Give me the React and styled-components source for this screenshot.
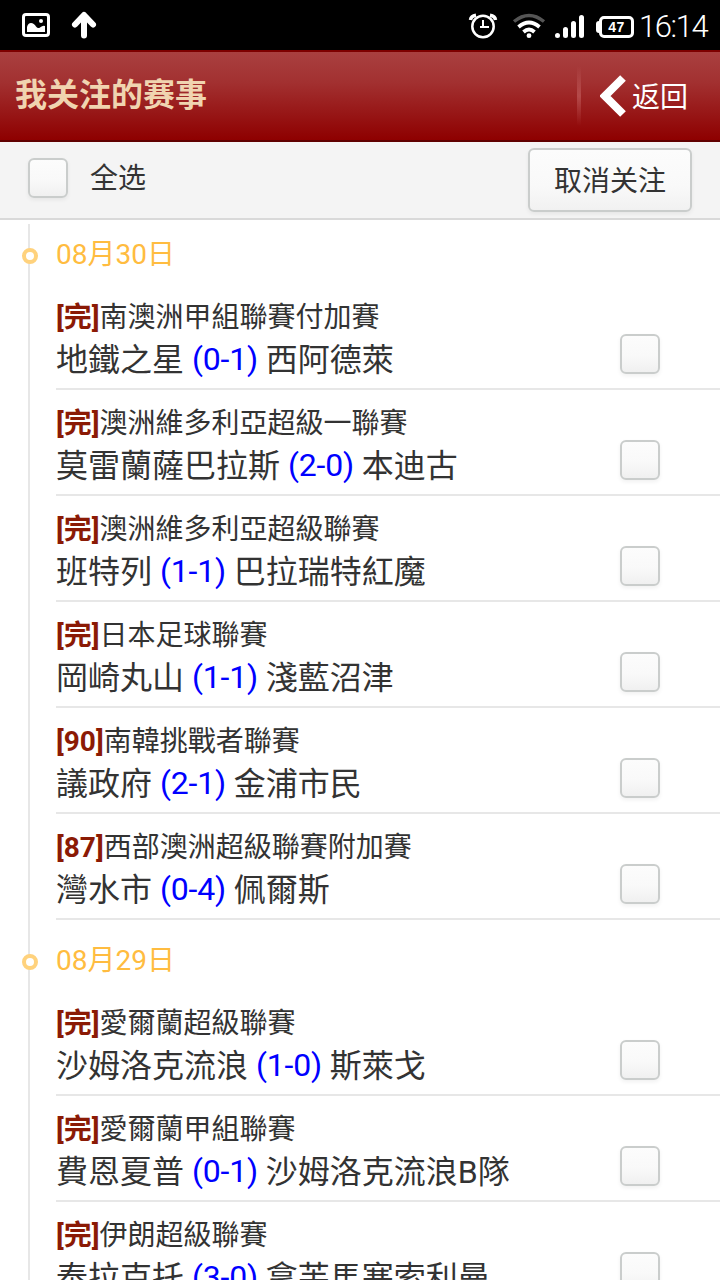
import React from 'react';
import styled, { createGlobalStyle } from 'styled-components';

const GlobalStyle = createGlobalStyle`
  *,
  *::before {
    box-sizing: border-box;
  }

  body {
    margin: 0;
    background: #fff;
    color: #333;
    font-family: Roboto, 'Noto Sans CJK SC', sans-serif;
    overflow: hidden;
  }
`;

const Screen = styled.div`
  width: 720px;
  height: 1280px;
  overflow: hidden;
  display: flex;
  flex-direction: column;
`;

/* Status bar */
const StatusBar = styled.div`
  flex: none;
  height: 50px;
  padding: 0 11px 0 20px;
  display: flex;
  justify-content: space-between;
  background: #000;
  color: #fff;
`;

const StatusGroup = styled.div`
  display: flex;
`;

const Battery = styled.div`
  display: flex;
  align-items: center;
  margin: 16px 0 0 12px;
  height: 22px;
`;

const BatteryTip = styled.span`
  width: 4px;
  height: 12px;
  margin-right: -1px;
  border-radius: 3px 0 0 3px;
  background: #fff;
`;

const BatteryBody = styled.span`
  width: 35px;
  height: 22px;
  border: 3px solid #fff;
  border-radius: 5px;
  font: bold 14px/16px 'Liberation Sans', sans-serif;
  letter-spacing: 0.4px;
  text-align: center;
`;

const Clock = styled.span`
  width: 70px;
  margin-left: 5px;
  font-family: Roboto, sans-serif;
  font-size: 31px;
  font-weight: 300;
  line-height: 54px;
  letter-spacing: -1.4px;
  white-space: nowrap;
`;

/* Header */
const Header = styled.header`
  flex: none;
  height: 92px;
  padding: 0 32px 0 15px;
  display: flex;
  align-items: center;
  border-top: 2px solid #7e0000;
  border-bottom: 2px solid #600000;
  background: linear-gradient(#a94040, #a23030 35%, #8e0000);
`;

const Title = styled.h1`
  flex: 1;
  margin: 0 0 2px;
  font-size: 32px;
  font-weight: 700;
  line-height: 40px;
  color: #f0d4b0;
`;

const Divider = styled.span`
  width: 4px;
  height: 60px;
  margin-right: 19px;
  background: linear-gradient(
    rgba(255, 255, 255, 0),
    rgba(255, 190, 190, 0.24),
    rgba(255, 255, 255, 0)
  );
`;

const BackButton = styled.button`
  display: flex;
  align-items: center;
  gap: 6px;
  padding: 0;
  border: 0;
  background: none;
  color: #fff;
  font-family: inherit;
  font-size: 28px;
  line-height: 40px;
`;

const BackLabel = styled.span`
  padding-top: 3px;
`;

/* Toolbar */
const Toolbar = styled.div`
  flex: none;
  height: 78px;
  padding: 6px 28px 0;
  display: flex;
  align-items: flex-start;
  background: #f4f4f4;
  border-bottom: 2px solid #d9d9d9;
`;

const Checkbox = styled.span`
  flex: none;
  width: 40px;
  height: 40px;
  margin-top: ${({ $top }) => $top}px;
  border: 2px solid #cacdcc;
  border-radius: 6px;
  background: linear-gradient(#fcfcfc, #f9f9f9 55%, #f0f0f0);
  box-shadow: 0 2px 4px rgba(0, 0, 0, 0.06);
`;

const SelectAll = styled.span`
  flex: 1;
  margin-left: 22px;
  font-size: 28px;
  line-height: 62px;
`;

const UnfollowButton = styled.button`
  width: 164px;
  height: 64px;
  padding: 0 0 2px;
  border: 2px solid #cacdcc;
  border-radius: 6px;
  background: linear-gradient(#fcfcfc, #f9f9f9 60%, #f1f1f1);
  box-shadow: 0 2px 4px rgba(0, 0, 0, 0.06);
  color: #333;
  font-family: inherit;
  font-size: 28px;
`;

/* Timeline */
const Timeline = styled.main`
  flex: none;
  display: flex;
  flex-direction: column;
  gap: 10px;
  margin: 4px 0 0 28px;
  padding-left: 26px;
  border-left: 2px solid #e7e7e7;
`;

const DateHeading = styled.h2`
  position: relative;
  height: 60px;
  margin: 0;
  font-size: 28px;
  font-weight: 400;
  line-height: 62px;
  color: #ffbc40;

  &::before {
    content: '';
    position: absolute;
    left: -34px;
    top: 24px;
    width: 16px;
    height: 16px;
    border: 4px solid #ffd27d;
    border-radius: 50%;
    background: #fff;
  }
`;

const MatchRow = styled.div`
  height: 106px;
  padding: 13px 60px 0 0;
  display: flex;
  justify-content: space-between;
  border-bottom: 2px solid #e7e7e7;
  white-space: nowrap;
`;

const League = styled.div`
  font-size: 28px;
  line-height: 42px;
`;

const Status = styled.b`
  color: #8b1a05;
`;

const Teams = styled.div`
  font-size: 32px;
  line-height: 42px;
`;

/* Digits sit a touch above the CJK baseline */
const Score = styled.span`
  color: #0000ff;
  letter-spacing: -0.2px;
  line-height: 1;
  vertical-align: 1px;
`;

const days = [
  {
    date: '08月30日',
    matches: [
      ['完', '南澳洲甲組聯賽付加賽', '地鐵之星', '0-1', '西阿德萊'],
      ['完', '澳洲維多利亞超級一聯賽', '莫雷蘭薩巴拉斯', '2-0', '本迪古'],
      ['完', '澳洲維多利亞超級聯賽', '班特列', '1-1', '巴拉瑞特紅魔'],
      ['完', '日本足球聯賽', '岡崎丸山', '1-1', '淺藍沼津'],
      ['90', '南韓挑戰者聯賽', '議政府', '2-1', '金浦市民'],
      ['87', '西部澳洲超級聯賽附加賽', '灣水市', '0-4', '佩爾斯'],
    ],
  },
  {
    date: '08月29日',
    matches: [
      ['完', '愛爾蘭超級聯賽', '沙姆洛克流浪', '1-0', '斯萊戈'],
      ['完', '愛爾蘭甲組聯賽', '費恩夏普', '0-1', '沙姆洛克流浪B隊'],
      ['完', '伊朗超級聯賽', '泰拉克托', '3-0', '拿芙馬塞索利曼'],
    ],
  },
];

function NotificationIcons() {
  return (
    <svg width="80" height="50" viewBox="20 0 80 50" fill="#fff">
      <rect x="23.5" y="14.5" width="25" height="21" rx="2.5" fill="none" stroke="#fff" strokeWidth="3" />
      <circle cx="41" cy="21" r="2" />
      <path d="M27 32V27Q28 23 31 23Q34 23 36 26.500Q38 29 40 27.500Q43 25 45 26V32Z" />
      <path d="M84 35.500V16M75 24.500L84 15L93 24.500" fill="none" stroke="#fff" strokeWidth="6" strokeLinecap="round" strokeLinejoin="round" />
    </svg>
  );
}

function SignalIcons() {
  return (
    <svg width="116" height="50" viewBox="468 0 116 50" fill="none" stroke="#fff">
      {/* alarm */}
      <circle cx="483" cy="26.500" r="10.700" strokeWidth="2.500" />
      <path d="M483 20V27H489M480 27H483" strokeWidth="2" />
      <path d="M470.500 20Q471 16 476 15.300M495.500 20Q495 16 490 15.300" strokeWidth="3.500" />
      {/* wifi */}
      <path d="M514 21.500Q529 9.500 544 21.500" stroke="#555" strokeWidth="3.500" />
      <path d="M518.500 27Q529 18 539.500 27M523.500 32Q529 27 534.500 32" strokeWidth="3.800" />
      <circle cx="529" cy="35.700" r="2.400" fill="#fff" stroke="none" />
      {/* signal */}
      <path d="M557.500 35.500V35.490M565.500 35.500V29.500M573.500 35.500V23.500M581.500 35.500V17.500" strokeWidth="5" strokeLinecap="round" />
    </svg>
  );
}

function App() {
  return (
    <>
      <GlobalStyle />
      <Screen>
        <StatusBar>
          <NotificationIcons />
          <StatusGroup>
            <SignalIcons />
            <Battery>
              <BatteryTip />
              <BatteryBody>47</BatteryBody>
            </Battery>
            <Clock>16:14</Clock>
          </StatusGroup>
        </StatusBar>

        <Header>
          <Title>我关注的赛事</Title>
          <Divider />
          <BackButton>
            <svg width="26" height="42" viewBox="0 0 26 42">
              <path d="M23 3L5 21L23 39" fill="none" stroke="#fff" strokeWidth="8" />
            </svg>
            <BackLabel>返回</BackLabel>
          </BackButton>
        </Header>

        <Toolbar>
          <Checkbox $top={10} />
          <SelectAll>全选</SelectAll>
          <UnfollowButton>取消关注</UnfollowButton>
        </Toolbar>

        <Timeline>
          {days.map((day) => (
            <section key={day.date}>
              <DateHeading>{day.date}</DateHeading>
              {day.matches.map(([status, league, home, score, away]) => (
                <MatchRow key={league}>
                  <div>
                    <League>
                      <Status>[{status}]</Status>
                      {league}
                    </League>
                    <Teams>
                      {home} <Score>({score})</Score> {away}
                    </Teams>
                  </div>
                  <Checkbox $top={37} />
                </MatchRow>
              ))}
            </section>
          ))}
        </Timeline>
      </Screen>
    </>
  );
}

export default App;
